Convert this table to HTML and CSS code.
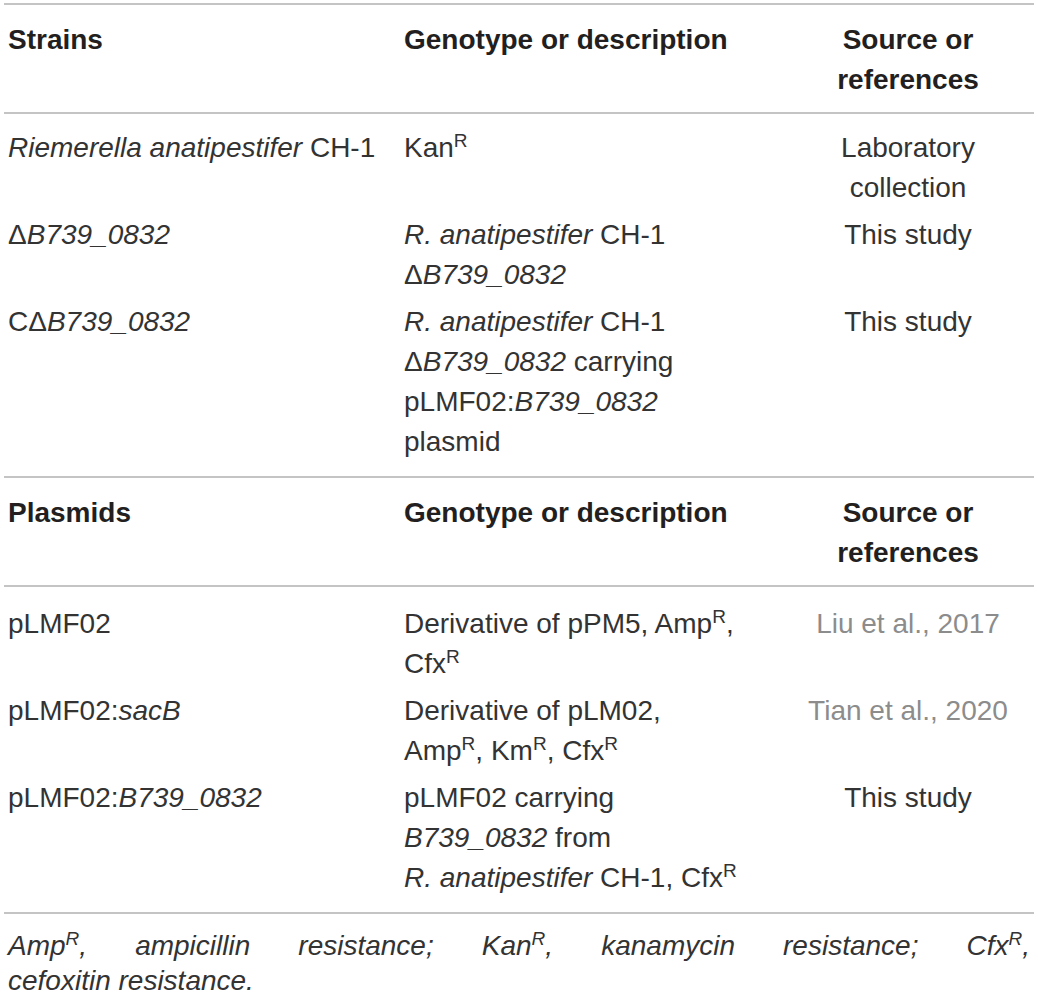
FILE: index.html
```html
<!DOCTYPE html>
<html lang="en">
<head>
<meta charset="utf-8">
<title>Strains and plasmids</title>
<link rel="stylesheet" href="styles.css">
</head>
<body>
<div class="wrap">
  <table class="data">
    <colgroup>
      <col class="c-name">
      <col class="c-desc">
      <col class="c-src">
    </colgroup>
    <tbody>
      <tr class="head">
        <th class="name">Strains</th>
        <th class="desc">Genotype or description</th>
        <th class="src">Source or references</th>
      </tr>
      <tr class="first">
        <td class="name"><i>Riemerella anatipestifer</i> CH-1</td>
        <td class="desc">Kan<sup class="sup">R</sup></td>
        <td class="src">Laboratory collection</td>
      </tr>
      <tr>
        <td class="name">Δ<i>B739_0832</i></td>
        <td class="desc"><i>R.&nbsp;anatipestifer</i> CH-1 Δ<i>B739_0832</i></td>
        <td class="src">This study</td>
      </tr>
      <tr class="last">
        <td class="name">CΔ<i>B739_0832</i></td>
        <td class="desc"><i>R.&nbsp;anatipestifer</i> CH-1 Δ<i>B739_0832</i> carrying pLMF02:<i>B739_0832</i> plasmid</td>
        <td class="src">This study</td>
      </tr>
    </tbody>
    <tbody>
      <tr class="head">
        <th class="name">Plasmids</th>
        <th class="desc">Genotype or description</th>
        <th class="src">Source or references</th>
      </tr>
      <tr class="first lower">
        <td class="name">pLMF02</td>
        <td class="desc">Derivative of pPM5, Amp<sup class="sup">R</sup>, Cfx<sup class="sup">R</sup></td>
        <td class="src ref">Liu et al., 2017</td>
      </tr>
      <tr>
        <td class="name">pLMF02:<i>sacB</i></td>
        <td class="desc">Derivative of pLM02, Amp<sup class="sup">R</sup>, Km<sup class="sup">R</sup>, Cfx<sup class="sup">R</sup></td>
        <td class="src ref">Tian et al., 2020</td>
      </tr>
      <tr class="last end">
        <td class="name">pLMF02:<i>B739_0832</i></td>
        <td class="desc">pLMF02 carrying <i>B739_0832</i> from <i>R.&nbsp;anatipestifer</i> CH-1, Cfx<sup class="sup">R</sup></td>
        <td class="src">This study</td>
      </tr>
    </tbody>
  </table>
  <p class="note">Amp<sup class="sup">R</sup>, ampicillin resistance; Kan<sup class="sup">R</sup>, kanamycin resistance; Cfx<sup class="sup">R</sup>, <span class="keep">cefoxitin resistance.</span></p>
</div>
</body>
</html>
```

FILE: styles.css
```css
html, body {
  margin: 0;
  padding: 0;
  background: #ffffff;
}

body {
  font-family: "Liberation Sans", Arial, sans-serif;
  color: #333333;
}

.wrap {
  width: 1030px;
  padding: 3px 4px 0 4px;
}

.data {
  width: 1030px;
  border-collapse: collapse;
  table-layout: fixed;
  font-size: 28px;
  line-height: 40px;
}

.c-name { width: 396px; }
.c-desc { width: 382px; }
.c-src { width: 252px; }

.head th {
  font-weight: bold;
  color: #231f20;
  text-align: left;
  vertical-align: top;
  padding: 15px 4px 12px 4px;
  border-top: 2px solid #c4c4c4;
  border-bottom: 2px solid #c4c4c4;
}

.data td {
  vertical-align: top;
  padding: 3.5px 4px;
}

.data .desc {
  padding-right: 40px;
}

.data .src {
  text-align: center;
}

.data .ref {
  color: #8c8c8c;
}

.data .first td {
  padding-top: 14px;
}

.data .lower td {
  padding-top: 17px;
}

.data .last td {
  padding-bottom: 14px;
}

.data .end td {
  border-bottom: 2px solid #c4c4c4;
}

.sup {
  font-size: 0.68em;
  line-height: 1;
  vertical-align: 0.55em;
}

.note {
  margin: 0;
  padding: 14px 4px 0 4px;
  font-size: 28px;
  line-height: 35px;
  font-style: italic;
  text-align: justify;
  color: #333333;
}

.keep {
  white-space: nowrap;
}
```
